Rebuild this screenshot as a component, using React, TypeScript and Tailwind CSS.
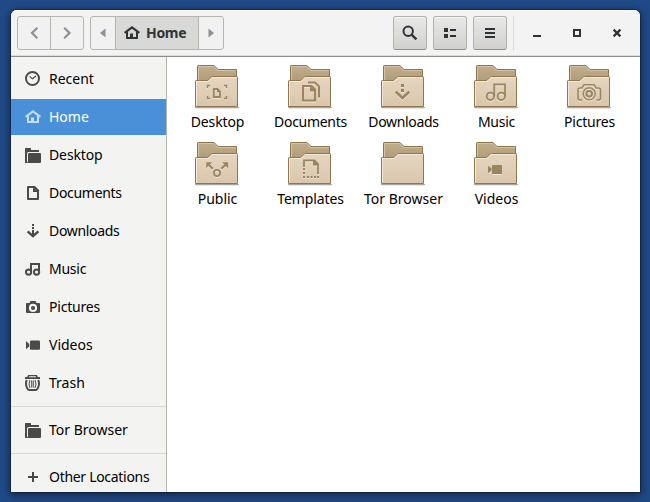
import React from "react";

type IconProps = { className?: string };

const svg16 = (children: React.ReactNode) =>
  function Icon({ className = "" }: IconProps) {
    return (
      <svg width="16" height="16" viewBox="0 0 16 16" fill="currentColor" className={"shrink-0 " + className}>
        {children}
      </svg>
    );
  };

const Clock = svg16(
  <>
    <circle cx="7.5" cy="7.5" r="6.5" fill="none" stroke="currentColor" strokeWidth="2" />
    <path d="M4.6 5.4L7.4 7.8L11 5" fill="none" stroke="currentColor" strokeWidth="1.2" />
  </>
);
const Home = svg16(
  <>
    <path d="M.6 7.9L8 2.3L15.4 7.9" fill="none" stroke="currentColor" strokeWidth="2.1" />
    <path d="M3 7V13H13V7" fill="none" stroke="currentColor" strokeWidth="2" />
    <path d="M6 8.6H9V13H6Z" />
  </>
);
const Folder = svg16(
  <>
    <path d="M0 1.5Q0 1 .5 1H5.5Q6 1 6 1.5V3H13.5Q14 3 14 3.5V5H3.5Q2 5 2 6.5V16H0Z" />
    <path d="M3 7Q3 6 4 6H15Q16 6 16 7V15Q16 16 15 16H1Q3 15.5 3 14Z" />
    <path d="M0 14H2V16H0Z" />
  </>
);
const Doc = svg16(
  <>
    <path d="M3 2H9.5L13 5.5V14H3Z" fill="none" stroke="currentColor" strokeWidth="2" strokeLinejoin="round" />
    <path d="M8 2L13.5 7H8Z" />
  </>
);
const Down = svg16(
  <>
    <path d="M7 1H9V3H7ZM7 4H9V6H7ZM7 7H9V12H7Z" />
    <path d="M2.6 8.3L8 13.2L13.4 8.3" fill="none" stroke="currentColor" strokeWidth="2.3" />
  </>
);
const Music = svg16(
  <>
    <path d="M6 11V3H14V11" fill="none" stroke="currentColor" strokeWidth="2" />
    <circle cx="3.6" cy="11.1" r="2.6" fill="none" stroke="currentColor" strokeWidth="2" />
    <circle cx="11.6" cy="11.1" r="2.6" fill="none" stroke="currentColor" strokeWidth="2" />
  </>
);
const Camera = svg16(
  <path
    fillRule="evenodd"
    d="M5.5 2H10.5L11.5 4H14Q15 4 15 5V13Q15 14 14 14H2Q1 14 1 13V5Q1 4 2 4H4.5ZM8 4.8A4.1 4.1 0 1 0 8 13A4.1 4.1 0 1 0 8 4.8ZM8 6.9A2 2 0 1 1 8 10.9A2 2 0 1 1 8 6.9Z"
  />
);
const Video = svg16(
  <>
    <rect x="5" y="3.6" width="10" height="9.2" rx="1" />
    <path d="M1 4L4.3 7V9.5L1 12.3Z" />
  </>
);
const Trash = svg16(
  <>
    <path fillRule="evenodd" d="M0 2H2.2L3 0H12L12.8 2H15V4H0ZM4.2 1.2L3.8 2.2H11.2L10.8 1.2Z" />
    <path d="M1.8 5Q0 9 2.2 13.2Q2.8 15 4.2 15H10.8Q12.2 15 12.8 13.2Q15 9 13.2 5" fill="none" stroke="currentColor" strokeWidth="1.9" />
    <path d="M5 5Q3 9 5 13M10 5Q12 9 10 13M6.7 5.5V12.5M8.3 5.5V12.5" fill="none" stroke="currentColor" strokeWidth="1" />
  </>
);
const Plus = svg16(<path d="M7 3H9V7H13V9H9V13H7V9H3V7H7Z" />);
const Search = svg16(
  <>
    <circle cx="6.2" cy="6.2" r="4.7" fill="none" stroke="currentColor" strokeWidth="2" />
    <path d="M9.6 9.6L14.4 14.4" stroke="currentColor" strokeWidth="2.4" />
  </>
);
const ListView = svg16(<path d="M2 3H6V7H2ZM8 4H14V6H8ZM2 9H6V13H2ZM8 10H14V12H8Z" />);
const Menu = svg16(<path d="M3 3H13V5H3ZM3 7H13V9H3ZM3 11H13V13H3Z" />);
const Minimize = svg16(<path d="M4 10H12V12H4Z" />);
const Maximize = svg16(<path fillRule="evenodd" d="M4 4H12V12H4ZM6 6V10H10V6Z" />);
const Close = svg16(<path d="M4.6 4.6L11.4 11.4M11.4 4.6L4.6 11.4" stroke="currentColor" strokeWidth="2.2" />);
const Back = svg16(<path d="M11.3 2.7L6 8L11.3 13.3" fill="none" stroke="currentColor" strokeWidth="2.2" />);
const Forward = svg16(<path d="M5.2 2.7L10.5 8L5.2 13.3" fill="none" stroke="currentColor" strokeWidth="2.2" />);
const TriLeft = svg16(<path d="M10.5 3.5V12.5L5 8Z" />);
const TriRight = svg16(<path d="M5.5 3.5V12.5L11 8Z" />);

const line = { fill: "none", stroke: "currentColor", strokeWidth: 2 } as const;

const emblems: Record<string, React.ReactNode> = {
  Desktop: (
    <>
      <path d="M14.5 26V23.5H17M31 23.5H33.5V26M33.5 34V36.5H31M17 36.5H14.5V34" {...line} strokeWidth={1.4} />
      <path d="M20.8 27H24.5L27 29.5V35H20.8Z" {...line} strokeWidth={1.8} />
      <path d="M24 26.5L27.8 30.3H24Z" />
    </>
  ),
  Documents: (
    <>
      <path d="M17 24H25.5L29 27.5V38.5H17Z" {...line} />
      <path d="M24 23.5L30 29.5H24Z" />
      <path d="M22 20.5H29L33 24.5V35.5" {...line} />
    </>
  ),
  Downloads: (
    <>
      <path d="M22 22H25V25H22ZM22 27H25V30H22Z" />
      <path d="M16.8 29.8L23.5 36L30.2 29.8" {...line} strokeWidth={2.6} />
    </>
  ),
  Music: (
    <>
      <path d="M22.2 34V22.4H33V34" {...line} strokeWidth={1.8} />
      <circle cx="18.4" cy="34.3" r="3.7" {...line} strokeWidth={1.8} />
      <circle cx="29.3" cy="34.3" r="3.7" {...line} strokeWidth={1.8} />
    </>
  ),
  Pictures: (
    <>
      <path d="M17 38H15Q13 38 13 36V28Q13 26 15 26H17L19 22.7H29L31 26H33.5Q35.5 26 35.5 28V36Q35.5 38 33.5 38H31.5" {...line} strokeWidth={1.6} />
      <circle cx="24.2" cy="31.8" r="6" {...line} strokeWidth={1.5} />
      <circle cx="24.2" cy="31.8" r="2.8" {...line} strokeWidth={2} />
    </>
  ),
  Public: (
    <>
      <circle cx="24" cy="34" r="3.1" {...line} strokeWidth={1.8} />
      <path d="M13.2 23.2H19.2L13.2 29.2ZM35 23.2H29L35 29.2Z" />
      <path d="M15 25L19.8 29.8M33.2 25L28.4 29.8" {...line} strokeWidth={2.2} />
    </>
  ),
  Templates: (
    <>
      <path d="M18 28V21.3H28.5L32 25V35" {...line} strokeWidth={1.8} />
      <path d="M27 20.5L33 26.5H27Z" />
      <path d="M17 29H19V31H17ZM17 33H19V35H17ZM17 37H19V39H17ZM21 37H23V39H21ZM24.5 37H26.5V39H24.5ZM28 37H30V39H28ZM31 37H33V39H31Z" />
    </>
  ),
  "Tor Browser": null,
  Videos: (
    <>
      <rect x="20" y="26" width="10" height="9" rx="0.5" />
      <path d="M16 26.5L19.5 29.5V31.5L16 34.5Z" />
    </>
  ),
};

function FolderIcon({ name }: { name: string }) {
  return (
    <svg width="48" height="48" viewBox="0 0 48 48" className="shrink-0">
      <defs>
        <linearGradient id="front" x1="0" y1="0" x2="0" y2="1">
          <stop offset="0" stopColor="#e6d6c0" />
          <stop offset="1" stopColor="#d9c6ab" />
        </linearGradient>
        <linearGradient id="back" x1="0" y1="0" x2="0" y2="1">
          <stop offset="0" stopColor="#c2ae8c" />
          <stop offset="1" stopColor="#b09b78" />
        </linearGradient>
      </defs>
      <path d="M2 45.5H46" stroke="#000" strokeOpacity="0.35" strokeWidth="1" />
      <path d="M3 46.5H45" stroke="#000" strokeOpacity="0.1" strokeWidth="1" />
      <path d="M4.5 20V4.3Q4.5 3.5 5.3 3.5H21L25 7.5H43.5V20Z" fill="url(#back)" stroke="#8c754b" />
      <path d="M5.5 18V4.5H20.6L24.6 8.5H42.5" fill="none" stroke="#d3c2a5" />
      <path d="M2.5 44.5V19.2Q2.5 18.5 3.3 18.5H14.3Q15 18.5 15.5 18L18.3 15.1Q18.9 14.5 19.7 14.5H43.7Q44.5 14.5 44.5 15.3V44.5Z" fill="url(#front)" stroke="#8f784f" />
      <path d="M3.5 43.5V19.5H15L19.2 15.5H43.5" fill="none" stroke="#f3e9da" />
      <g color="#f0e5d5" fill="#f0e5d5" transform="translate(0 1)">{emblems[name]}</g>
      <g color="#9b8460" fill="#9b8460">{emblems[name]}</g>
    </svg>
  );
}

const tracking: Record<string, string> = {
  Desktop: "tracking-[-0.12px]",
  Documents: "tracking-[-0.3px]",
  Downloads: "tracking-[-0.33px]",
  Music: "tracking-[-0.25px]",
  Pictures: "tracking-[-0.2px]",
  Templates: "tracking-[-0.1px]",
  "Other Locations": "tracking-[-0.3px]",
};

const places = [
  { label: "Recent", Icon: Clock },
  { label: "Home", Icon: Home },
  { label: "Desktop", Icon: Folder },
  { label: "Documents", Icon: Doc },
  { label: "Downloads", Icon: Down },
  { label: "Music", Icon: Music },
  { label: "Pictures", Icon: Camera },
  { label: "Videos", Icon: Video },
  { label: "Trash", Icon: Trash },
];

function Place({ label, Icon }: { label: string; Icon: React.ComponentType<IconProps> }) {
  const active = label === "Home";
  return (
    <div className={"flex h-9 shrink-0 items-center gap-2 pl-3.5 " + (active ? "bg-[#4a90d9] text-white" : "text-black")}>
      <Icon className={active ? "text-[#c5dcf3]" : "text-[#4a4a48]"} />
      <span className={"whitespace-nowrap " + (tracking[label] ?? "")}>{label}</span>
    </div>
  );
}

function HeaderButton({ children }: { children: React.ReactNode }) {
  return (
    <button className="flex size-[34px] items-center justify-center rounded-[3px] border border-[#b2b2ad] border-b-[#91918c] bg-linear-to-b from-[#e9e9e7] to-[#d1d1ce] shadow-[inset_0_1px_#f8f8f7]">
      {children}
    </button>
  );
}

const files = ["Desktop", "Documents", "Downloads", "Music", "Pictures", "Public", "Templates", "Tor Browser", "Videos"];

export default function App() {
  return (
    <div className="h-[502px] w-[650px] overflow-hidden bg-[#204a87] pt-[10px] pl-[11px] font-['Noto_Sans',sans-serif] text-[14px] leading-5">
      <div className="flex h-[482px] w-[629px] flex-col overflow-hidden rounded-t-[6px] bg-white shadow-[0_0_0_1px_rgba(0,0,0,0.25),0_2px_9px_1px_rgba(0,0,0,0.5)]">
        <header className="flex h-[47px] shrink-0 items-center border-b border-[#8f8f8a] bg-[#f3f3f3] pl-1.5 text-[#2e3436] shadow-[inset_0_1px_white,inset_0_-1px_#dcdcd8]">
          <div className="flex h-[34px] w-[67px] rounded-[3px] border border-[#b6b6b1] bg-[#f1f1f1] text-[#8e9191]">
            <div className="flex w-[33px] items-center justify-center border-r border-[#b6b6b1]"><Back /></div>
            <div className="flex flex-1 items-center justify-center"><Forward /></div>
          </div>
          <div className="ml-1.5 flex h-[34px] w-[134px] rounded-[3px] border border-[#b6b6b1] bg-[#f1f1f1] text-[#8e9191]">
            <div className="flex w-[25px] items-center justify-center border-r border-[#b6b6b1]"><TriLeft /></div>
            <div className="flex w-[83px] items-center gap-1.5 border-r border-[#b6b6b1] bg-[#d8d8d6] pl-2 text-[#2e3436]">
              <Home />
              <span className="font-bold tracking-[-0.3px]">Home</span>
            </div>
            <div className="flex flex-1 items-center justify-center"><TriRight /></div>
          </div>
          <div className="ml-auto flex items-center gap-1.5">
            <HeaderButton><Search /></HeaderButton>
            <HeaderButton><ListView /></HeaderButton>
            <HeaderButton><Menu /></HeaderButton>
            <div className="h-[34px] w-px bg-[#d9d9d7]" />
          </div>
          <div className="flex gap-6 pr-[15px] pl-[15px]">
            <Minimize />
            <Maximize />
            <Close />
          </div>
        </header>
        <div className="flex min-h-0 flex-1">
          <aside className="flex w-[156px] shrink-0 flex-col overflow-hidden border-r border-[#b6b6b1] bg-[#f3f3f2] pt-1">
            <nav className="flex flex-col gap-0.5">
              {places.map((p) => (
                <Place key={p.label} {...p} />
              ))}
            </nav>
            <div className="my-[5px] h-px shrink-0 bg-[#d8d8d6]" />
            <Place label="Tor Browser" Icon={Folder} />
            <div className="my-[5px] h-px shrink-0 bg-[#d8d8d6]" />
            <Place label="Other Locations" Icon={Plus} />
          </aside>
          <main className="grid flex-1 auto-rows-[77px] grid-cols-[repeat(5,93px)] pt-[5px] pl-1">
            {files.map((name) => (
              <div key={name} className="flex flex-col items-start">
                <div className="pl-[22px]"><FolderIcon name={name} /></div>
                <span className={"mt-0.5 self-center whitespace-nowrap text-black " + (tracking[name] ?? "")}>{name}</span>
              </div>
            ))}
          </main>
        </div>
      </div>
    </div>
  );
}
